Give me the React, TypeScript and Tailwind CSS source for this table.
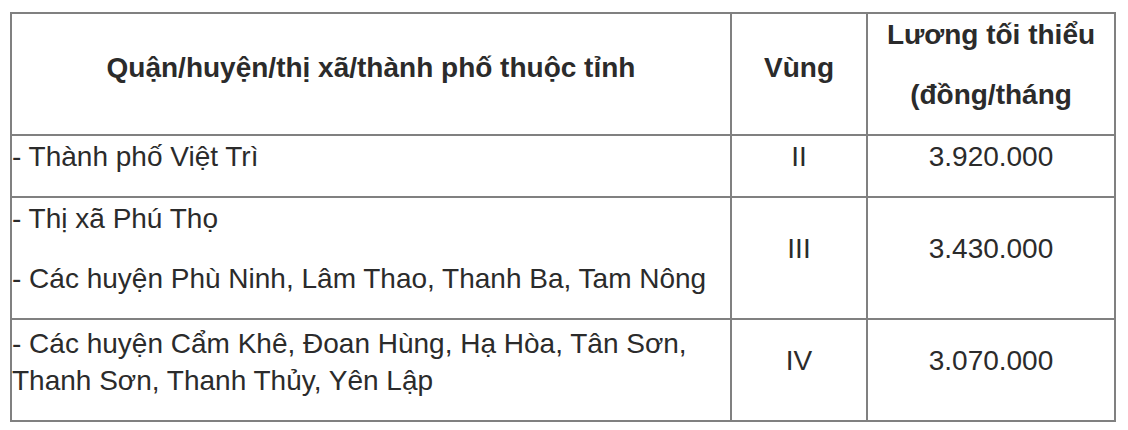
import React from "react";

const cell = "border-r-2 border-b-2 border-[#808080] align-middle px-0 pb-0";
const P = ({ children, last = true }: { children: React.ReactNode; last?: boolean }) => (
  <p className={"m-0 leading-[37px] " + (last ? "mb-[21px]" : "mb-[23px]")}>{children}</p>
);

export default function App() {
  return (
    <div className="bg-white w-[1128px] h-[430px] pl-[10px] pt-[12px]">
      <table
        className="table-fixed w-[1106px] border-separate border-spacing-0 border-t-2 border-l-2 border-[#808080] text-[28px] text-[#2b2b2b]"
        style={{ fontFamily: '"Liberation Sans", Arial, sans-serif' }}
      >
        <colgroup>
          <col className="w-[720px]" />
          <col className="w-[136px]" />
          <col className="w-[248px]" />
        </colgroup>
        <tbody>
          <tr className="h-[122px] font-bold text-center">
            <td className={cell + " pt-[7px]"}>
              <P>Quận/huyện/thị xã/thành phố thuộc tỉnh</P>
            </td>
            <td className={cell + " pt-[7px]"}>
              <P>Vùng</P>
            </td>
            <td className={cell + " pt-[2px]"}>
              <P last={false}>Lương tối thiểu</P>
              <P>(đồng/tháng</P>
            </td>
          </tr>
          <tr className="h-[62px]">
            <td className={cell + " pt-[2px]"}>
              <P>- Thành phố Việt Trì</P>
            </td>
            <td className={cell + " pt-[2px] text-center"}>
              <P>II</P>
            </td>
            <td className={cell + " pt-[2px] text-center"}>
              <P>3.920.000</P>
            </td>
          </tr>
          <tr className="h-[122px]">
            <td className={cell + " pt-[2px]"}>
              <P last={false}>- Thị xã Phú Thọ</P>
              <P>- Các huyện Phù Ninh, Lâm Thao, Thanh Ba, Tam Nông</P>
            </td>
            <td className={cell + " pt-[2px] text-center"}>
              <P>III</P>
            </td>
            <td className={cell + " pt-[2px] text-center"}>
              <P>3.430.000</P>
            </td>
          </tr>
          <tr className="h-[102px]">
            <td className={cell + " pt-[5px]"}>
              <P>
                - Các huyện Cẩm Khê, Đoan Hùng, Hạ Hòa, Tân Sơn, Thanh Sơn, Thanh Thủy, Yên Lập
              </P>
            </td>
            <td className={cell + " pt-[2px] text-center"}>
              <P>IV</P>
            </td>
            <td className={cell + " pt-[2px] text-center"}>
              <P>3.070.000</P>
            </td>
          </tr>
        </tbody>
      </table>
    </div>
  );
}
